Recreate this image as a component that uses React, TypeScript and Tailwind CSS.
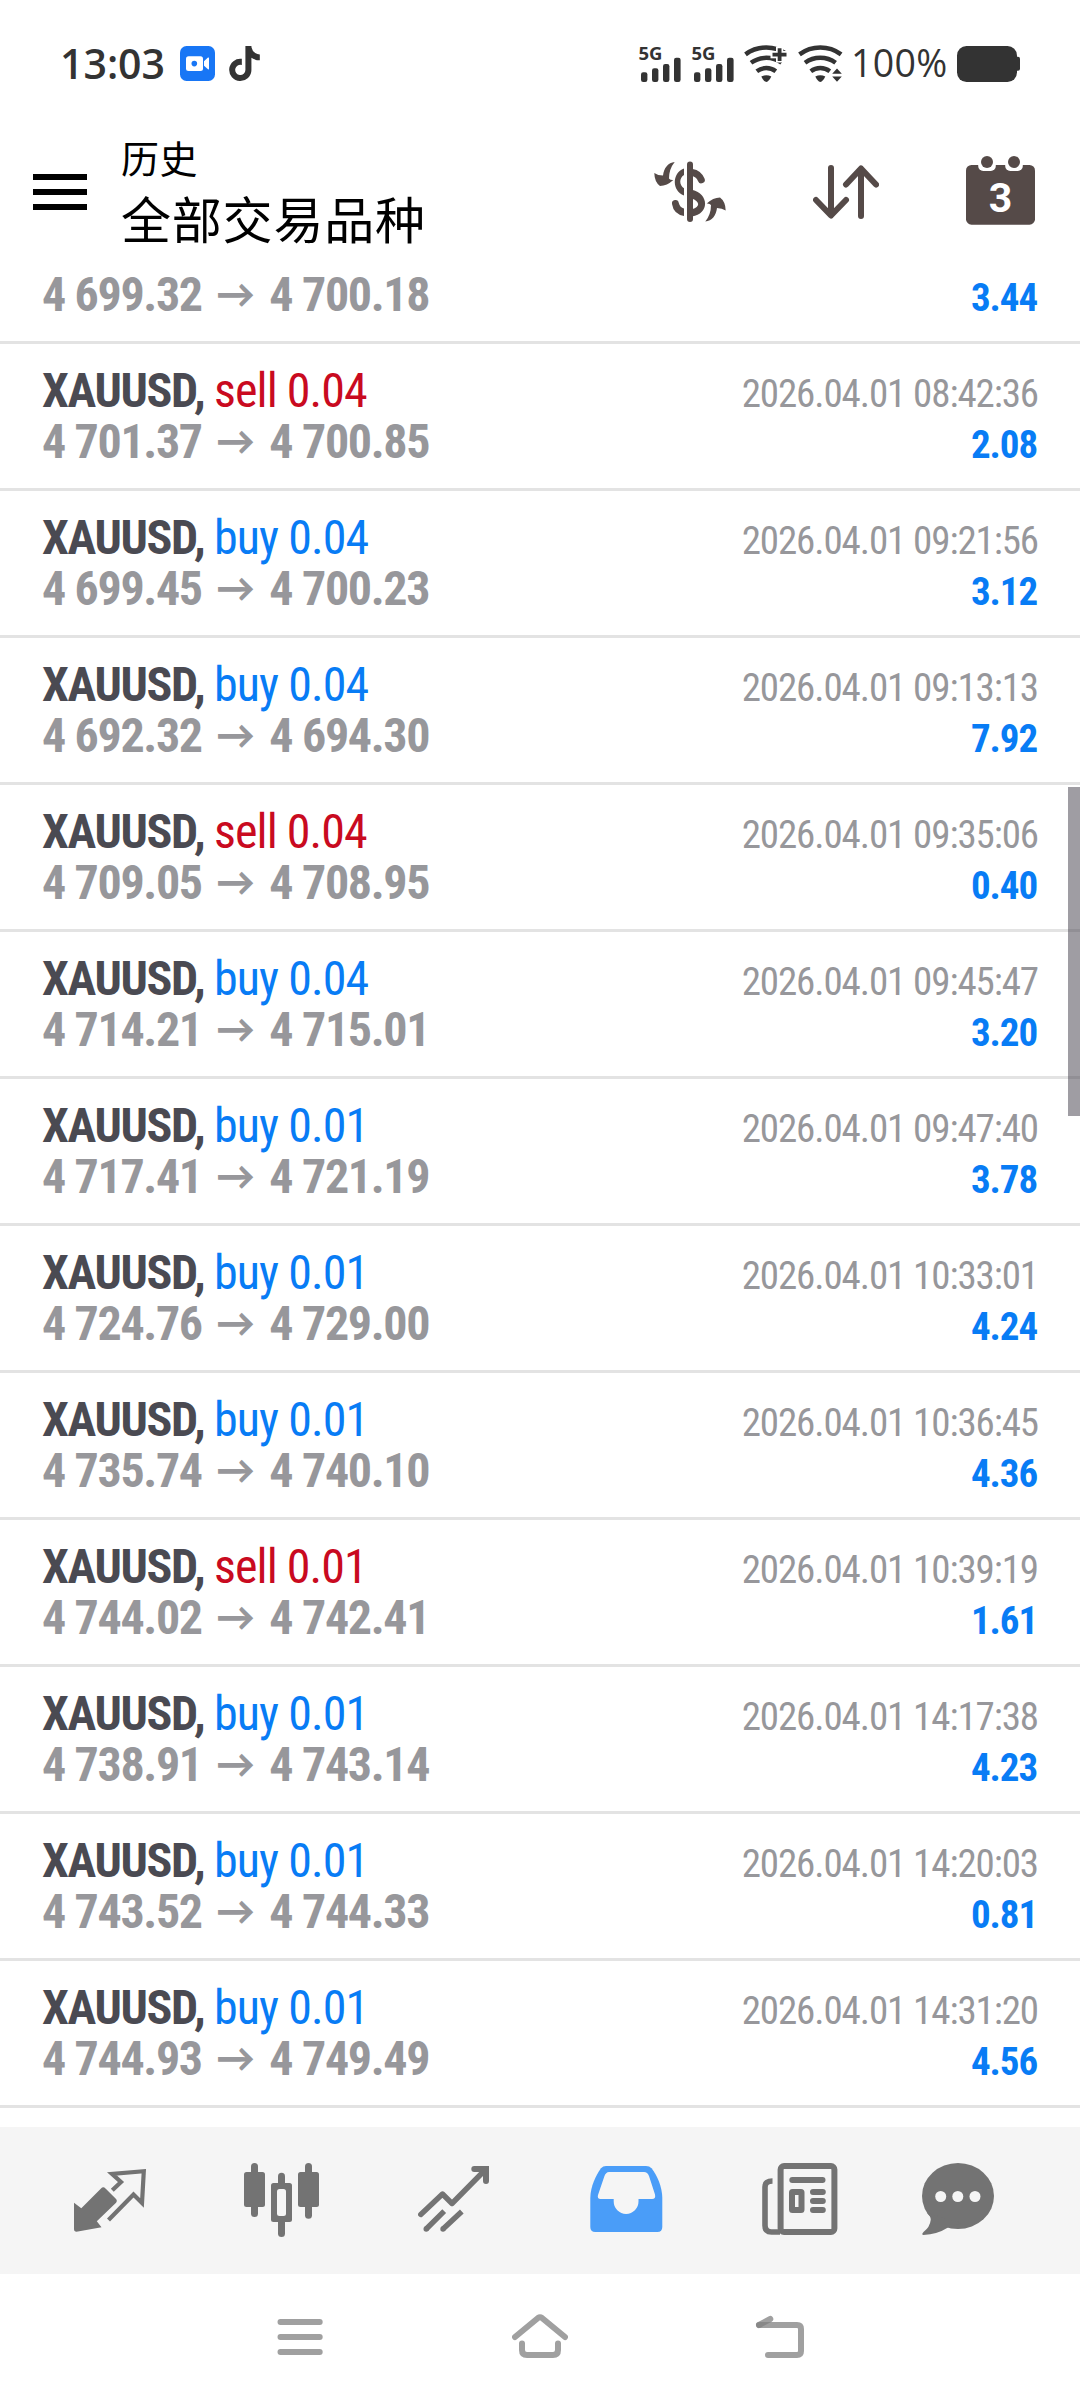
import React from 'react';
import { FaTiktok } from 'react-icons/fa6';

interface Deal {
    side: 'buy' | 'sell';
    volume: string;
    open: string;
    close: string;
    time: string;
    profit: string;
}

const deals: Deal[] = [
    { side: 'sell', volume: '0.04', open: '4 701.37', close: '4 700.85', time: '2026.04.01 08:42:36', profit: '2.08' },
    { side: 'buy', volume: '0.04', open: '4 699.45', close: '4 700.23', time: '2026.04.01 09:21:56', profit: '3.12' },
    { side: 'buy', volume: '0.04', open: '4 692.32', close: '4 694.30', time: '2026.04.01 09:13:13', profit: '7.92' },
    { side: 'sell', volume: '0.04', open: '4 709.05', close: '4 708.95', time: '2026.04.01 09:35:06', profit: '0.40' },
    { side: 'buy', volume: '0.04', open: '4 714.21', close: '4 715.01', time: '2026.04.01 09:45:47', profit: '3.20' },
    { side: 'buy', volume: '0.01', open: '4 717.41', close: '4 721.19', time: '2026.04.01 09:47:40', profit: '3.78' },
    { side: 'buy', volume: '0.01', open: '4 724.76', close: '4 729.00', time: '2026.04.01 10:33:01', profit: '4.24' },
    { side: 'buy', volume: '0.01', open: '4 735.74', close: '4 740.10', time: '2026.04.01 10:36:45', profit: '4.36' },
    { side: 'sell', volume: '0.01', open: '4 744.02', close: '4 742.41', time: '2026.04.01 10:39:19', profit: '1.61' },
    { side: 'buy', volume: '0.01', open: '4 738.91', close: '4 743.14', time: '2026.04.01 14:17:38', profit: '4.23' },
    { side: 'buy', volume: '0.01', open: '4 743.52', close: '4 744.33', time: '2026.04.01 14:20:03', profit: '0.81' },
    { side: 'buy', volume: '0.01', open: '4 744.93', close: '4 749.49', time: '2026.04.01 14:31:20', profit: '4.56' },
];

const SignalIcon: React.FC = () => (
    <svg className="overflow-visible" width="42" height="38" viewBox="0 0 42 38" fill="#333333">
        <text x="-0.5" y="15" fontSize="18.5" className="font-bold font-['Open_Sans',sans-serif]">5G</text>
        <rect x="2" y="27.3" width="6.4" height="9.7" rx="2.2" />
        <rect x="13" y="23.3" width="6.4" height="13.7" rx="2.2" />
        <rect x="24" y="19" width="6.4" height="18" rx="2.2" />
        <rect x="35" y="12.7" width="6.6" height="24.3" rx="2.2" />
    </svg>
);

const WifiArcs: React.FC = () => (
    <>
        <g fill="none" stroke="#333333" strokeWidth="4.5">
            <path d="M1.5 9.4A35 35 0 0 1 43.1 9.4" />
            <path d="M7 17.8A26 26 0 0 1 37.6 17.8" />
            <path d="M12.8 26.2A16 16 0 0 1 31.8 26.2" />
        </g>
        <path d="M17.3 31.6Q22.3 29 27.3 31.6Q25 36.6 22.3 37Q19.6 36.6 17.3 31.6Z" fill="#333333" />
    </>
);

const StatusBar: React.FC = () => (
    <div className="flex h-[129px] items-start">
        <div className="ml-[60px] mt-[33px] w-[106px] text-[41px] leading-[60px] font-semibold text-[#333333] font-['Open_Sans',sans-serif]">13:03</div>
        <svg className="ml-[14px] mt-[46px]" width="35" height="35" viewBox="0 0 35 35">
            <rect width="35" height="35" rx="6.5" fill="#1876f5" />
            <rect x="6" y="10.3" width="17" height="14.8" rx="2.5" fill="#fff" />
            <circle cx="14.3" cy="17.6" r="2.8" fill="#1876f5" />
            <path d="M24 15.2L28 11.6Q29 11 29 12.2V22.8Q29 24 28 23.3L24 19.8Z" fill="#fff" />
        </svg>
        <FaTiktok className="ml-[14px] mt-[46px] h-[35px] w-[31px] text-[#333333]" />
        <div className="ml-auto mt-[45px] mr-[60px] flex items-start">
            <SignalIcon />
            <span className="ml-[11px]"><SignalIcon /></span>
            <svg className="ml-[10px]" width="44" height="38" viewBox="0 0 44 38">
                <WifiArcs />
                <rect x="26.5" y="6" width="17.5" height="7.3" fill="#fff" />
                <rect x="32" y="1.5" width="7.3" height="16" fill="#fff" />
                <path d="M28.5 9.6H42.5M35.6 3.2V16" stroke="#333333" strokeWidth="3.8" />
            </svg>
            <svg className="ml-[10px]" width="46" height="38" viewBox="0 0 46 38">
                <WifiArcs />
                <path d="M39 23.6L43.8 28.8H34.2ZM34.2 31.4H43.8L39 36.8Z" fill="#333333" />
            </svg>
            <div className="ml-[7px] mt-[-8px] w-[98px] text-[37.5px] leading-[52px] tracking-[0.3px] font-medium text-[#333333] font-['Open_Sans',sans-serif]">100%</div>
            <svg className="ml-[7px]" width="64" height="38" viewBox="0 0 64 38" fill="#333333">
                <rect x="1" y="1" width="60" height="36" rx="9.5" />
                <rect x="58" y="11.7" width="6" height="14" rx="2" />
            </svg>
        </div>
    </div>
);

const DollarIcon: React.FC = () => {
    const arrow = 'M20.7 1C14 1.5 10 7 9 14.5Q4 14.5 0.3 12Q0.5 21 6 25Q13 24.8 19.3 19Q16.5 19.3 15 17.5Q15 8 20.7 1Z';
    return (
        <svg width="72" height="62" viewBox="0 0 72 62" fill="#554a48">
            <path d={arrow} />
            <path d={arrow} transform="rotate(180 36 30.8)" />
            <path d="M36 3.6V58" stroke="#554a48" strokeWidth="6" strokeLinecap="round" />
            <path d="M30 7.4C17.5 12 18 30 30 34.5V27.3C25 24 25 17 30 14Z" />
            <path d="M38 11.4Q44.5 12.5 47.3 18.8" fill="none" stroke="#554a48" strokeWidth="7" strokeLinecap="round" />
            <path d="M38 28.8C55.5 33 55.5 53 38 55.5V48.3C46.5 45.5 46 41 38 37.5Z" />
            <path d="M30 47.5Q26 46.5 24.8 42A3.4 3.4 0 0 0 18 43Q19.5 53 30 55Z" />
        </svg>
    );
};

const Header: React.FC = () => (
    <header className="flex h-[133px] items-start">
        <div className="ml-[33px] mt-[45px] flex w-[54px] flex-col gap-[9px]">
            <div className="h-[6px] bg-black" />
            <div className="h-[6px] bg-black" />
            <div className="h-[6px] bg-black" />
        </div>
        <div className="-mt-[2px] ml-[34px] text-black font-['Noto_Sans_CJK_SC',sans-serif]">
            <div className="h-[60px] text-[38px] leading-[60px] tracking-[0.5px]">历史</div>
            <div className="h-[60px] text-[50px] leading-[60px] tracking-[0.8px]">全部交易品种</div>
        </div>
        <div className="ml-auto mr-[45px] flex items-start">
            <div className="mt-[32px]"><DollarIcon /></div>
            <svg className="ml-[87px] mt-[36px]" width="66" height="54" viewBox="0 0 66 54" fill="none" stroke="#554a48" strokeWidth="6" strokeLinecap="round" strokeLinejoin="round">
                <path d="M18 3V50M3 35L18 50.5L33 35" />
                <path d="M48 51V4M33 19.5L48 3.5L63 19.5" />
            </svg>
            <svg className="ml-[87px] mt-[27px]" width="69" height="69" viewBox="0 0 69 69">
                <rect y="9" width="69" height="59.7" rx="5.5" fill="#554a48" />
                <rect x="12.2" y="2" width="17.6" height="13" rx="5" fill="#fff" />
                <rect x="39.2" y="2" width="17.6" height="13" rx="5" fill="#fff" />
                <circle cx="21" cy="6" r="6" fill="#554a48" />
                <circle cx="48" cy="6" r="6" fill="#554a48" />
                <text x="34.4" y="56.3" textAnchor="middle" fontSize="41" fill="#fff" className="font-bold font-['Roboto',sans-serif]">3</text>
            </svg>
        </div>
    </header>
);

const PriceLine: React.FC<{ open: string; close: string; profit: string }> = ({ open, close, profit }) => (
    <div className="flex h-[51px] items-baseline justify-between font-bold leading-[51px]">
        <div className="flex items-baseline text-[48px] tracking-[-1.35px] text-[#97979b]">
            <span>{open}</span>
            <span className="w-[67.6px] self-start text-center text-[39px] leading-[49px] tracking-normal font-black font-['Lato',sans-serif]">→</span>
            <span>{close}</span>
        </div>
        <span className="mr-[1px] text-[39px] tracking-[-1.1px] text-[#087cf5]">{profit}</span>
    </div>
);

const DealRow: React.FC<{ deal: Deal }> = ({ deal }) => (
    <li className="h-[147px] border-b-[3px] border-[#e3e3e3] px-[42px] py-[21px]">
        <div className="flex h-[51px] items-baseline justify-between leading-[51px]">
            <div className="text-[48px] whitespace-pre">
                <span className="font-bold tracking-[-1.35px] text-[#4a4a52]">XAUUSD, </span>
                <span className={deal.side === 'sell' ? 'tracking-[-0.95px] text-[#c90a20]' : 'tracking-[-0.95px] text-[#087cf5]'}>
                    {deal.side} {deal.volume}
                </span>
            </div>
            <span className="text-[39px] tracking-[-1.1px] text-[#97979b]">{deal.time}</span>
        </div>
        <PriceLine open={deal.open} close={deal.close} profit={deal.profit} />
    </li>
);

const TabBar: React.FC = () => (
    <nav className="flex h-[147px] items-start bg-[#f5f5f5] pt-[36px] pl-[74px]">
        <svg width="72" height="75" viewBox="0 0 72 75">
            <path d="M0 39.7L7.3 45.3L27 25.5Q29.3 23.2 31.5 25.5L41.8 35.7Q43.8 37.8 41.8 40L22.8 58.3L27.5 64.2L2.5 68.8Q0 68.8 0 66Z" fill="#737373" />
            <path d="M38.3 27.3L47 19L38 10.9L69.8 8.2L68 40L59.5 31.5L34.5 57" fill="none" stroke="#737373" strokeWidth="4.2" />
        </svg>
        <svg className="ml-[98px]" width="75" height="75" viewBox="0 0 75 75" fill="#737373">
            <rect x="7" width="7" height="54" rx="3.5" />
            <rect y="9" width="21" height="35" rx="2.5" />
            <rect x="34" y="9.7" width="7" height="64.3" rx="3.5" />
            <rect x="27" y="20" width="21" height="39" rx="2.5" />
            <rect x="33" y="26" width="9" height="27" rx="2.5" fill="#f5f5f5" />
            <rect x="61" width="7" height="55.7" rx="3.5" />
            <rect x="54" y="9" width="21" height="35" rx="2.5" />
        </svg>
        <svg className="ml-[99px]" width="72" height="75" viewBox="0 0 72 75" fill="none" stroke="#737373" strokeWidth="5.4">
            <path d="M2.8 51.5L24.5 31L34 40.5L68 6" strokeLinecap="round" strokeLinejoin="round" />
            <path d="M56.3 6H68V18" strokeWidth="6" strokeLinecap="round" />
            <path d="M26.2 48.2L8.2 66M43.8 48.5L25 66" />
            <circle cx="8.2" cy="66" r="2.7" fill="#737373" stroke="none" />
            <circle cx="25" cy="66" r="2.7" fill="#737373" stroke="none" />
        </svg>
        <svg className="ml-[100px]" width="73" height="75" viewBox="0 0 73 75">
            <path d="M0.3 35C0.3 24 6 12 11 5.2Q13 3 16 3H56Q59.5 3 61.5 5.2C67 12 72.3 24 72.3 35V64Q72.3 69 67.3 69H5.3Q0.3 69 0.3 64Z" fill="#4a9df8" />
            <path d="M19 9H54Q57.5 9 59 13L65 31.5Q66 36 62 36H48.5V38.6A12.4 12.4 0 0 1 23.7 38.6V36H10.5Q7 36 8 32L14.3 13.5Q15.8 9 19 9Z" fill="#f5f5f5" />
        </svg>
        <svg className="ml-[99px]" width="76" height="75" viewBox="0 0 76 75" fill="none" stroke="#737373" strokeWidth="6">
            <rect x="18.6" y="3" width="53.8" height="66" rx="3.5" />
            <path d="M10.5 18Q3 18 3 24V62.5Q3 69 9.5 69H18" strokeWidth="5.6" />
            <path d="M30.3 17H60.5M51 29H60.8M51 38H60.8M51 47H60.8" strokeLinecap="round" />
            <rect x="30" y="29" width="9.5" height="18" rx="0.5" strokeLinejoin="round" />
        </svg>
        <svg className="ml-[84px]" width="72" height="75" viewBox="0 0 72 75">
            <ellipse cx="36" cy="33" rx="36" ry="33" fill="#737373" />
            <path d="M5 50Q9 53 8.7 57Q8 64 1.5 69Q-1 71.5 1.5 72Q15 71.5 26 64.5L40 60Z" fill="#737373" />
            <g fill="#f5f5f5">
                <circle cx="18.7" cy="33.5" r="5.5" />
                <circle cx="35.8" cy="33.5" r="5.5" />
                <circle cx="53" cy="33.5" r="5.5" />
            </g>
        </svg>
    </nav>
);

const SystemNav: React.FC = () => (
    <div className="flex h-[126px] items-start gap-[184px] pt-[38px] pl-[272px]">
        <svg width="56" height="50" viewBox="0 0 56 50" fill="none" stroke="#a0a0a0" strokeWidth="6" strokeLinecap="round">
            <path d="M8.5 10H47.7M8.5 25H47.7M8.5 40H47.7" />
        </svg>
        <svg width="56" height="50" viewBox="0 0 56 50" fill="none" stroke="#a0a0a0" strokeWidth="6" strokeLinecap="round" strokeLinejoin="round">
            <path d="M3 25L26 6Q28 4.6 30 6L53 25" />
            <path d="M10 31.5V38Q10 43 15 43H41Q46 43 46 38V31.5" />
        </svg>
        <svg width="56" height="50" viewBox="0 0 56 50" fill="none" stroke="#808080" strokeOpacity="0.75" strokeWidth="6" strokeLinecap="round" strokeLinejoin="round">
            <path d="M7 13L18.3 7" />
            <path d="M7 13H45Q49 13 49 17V39Q49 43 45 43H16" />
        </svg>
    </div>
);

const App: React.FC = () => {
    return (
        <div className="relative flex h-[2400px] w-[1080px] flex-col overflow-hidden bg-white font-['Roboto',sans-serif]">
            <StatusBar />
            <Header />
            <ul className="h-[1865px] font-stretch-75%">
                {/* row scrolled half under the header */}
                <li className="h-[82px] border-b-[3px] border-[#e3e3e3] px-[42px] pt-[7px]">
                    <PriceLine open="4 699.32" close="4 700.18" profit="3.44" />
                </li>
                {deals.map((deal) => (
                    <DealRow key={deal.time} deal={deal} />
                ))}
            </ul>
            <TabBar />
            <SystemNav />
            <div className="absolute top-[787px] right-0 h-[329px] w-[12px] bg-[#403c48]/50" />
        </div>
    );
};

export default App;
